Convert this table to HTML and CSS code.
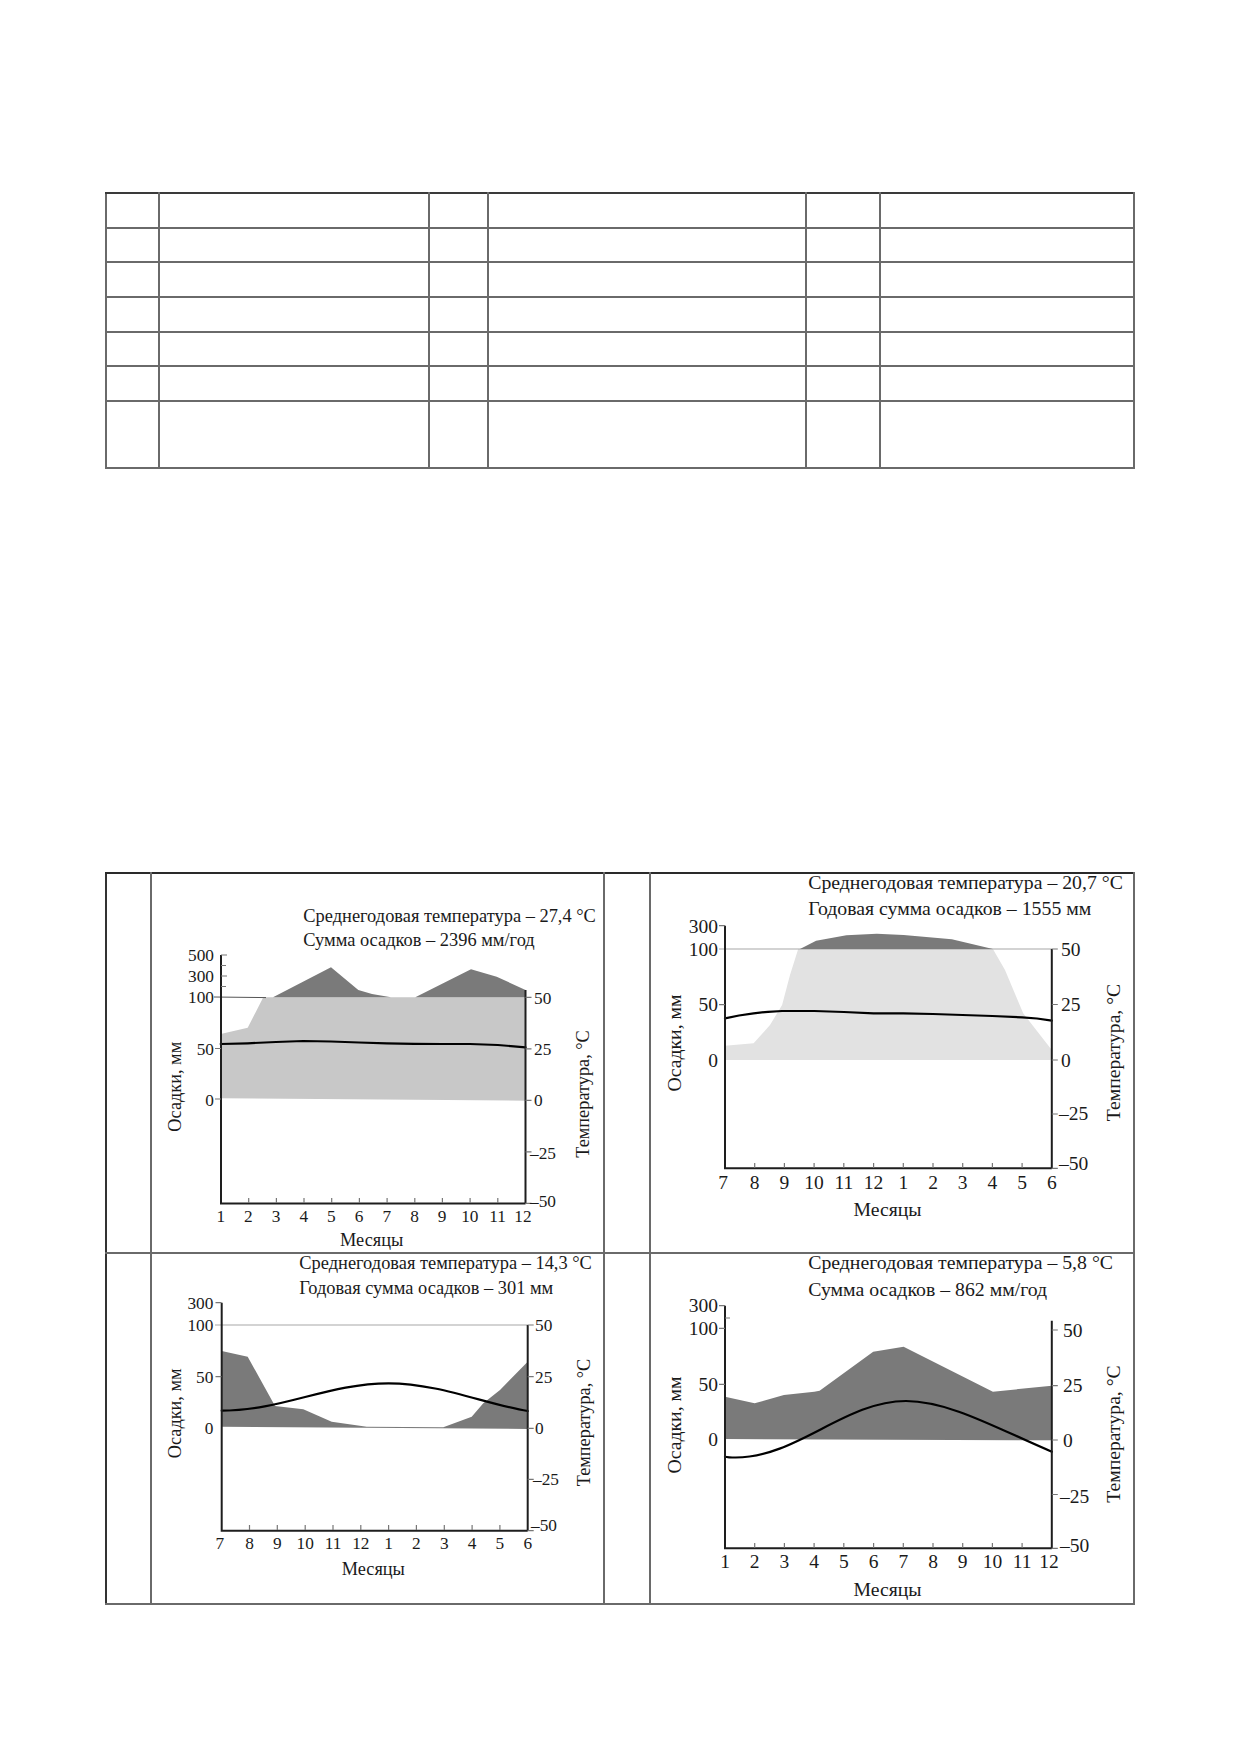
FILE: index.html
```html
<!DOCTYPE html>
<html lang="ru">
<head>
<meta charset="utf-8">
<title>Климатограммы</title>
<link rel="stylesheet" href="styles.css">
</head>
<body>
<div class="page">
  <table class="grid grid-top">
    <colgroup>
      <col class="c-n1"><col class="c-w1"><col class="c-n2"><col class="c-w2"><col class="c-n3"><col class="c-w3">
    </colgroup>
    <tr class="r35"><td></td><td></td><td></td><td></td><td></td><td></td></tr>
    <tr class="r34"><td></td><td></td><td></td><td></td><td></td><td></td></tr>
    <tr class="r35"><td></td><td></td><td></td><td></td><td></td><td></td></tr>
    <tr class="r35"><td></td><td></td><td></td><td></td><td></td><td></td></tr>
    <tr class="r34"><td></td><td></td><td></td><td></td><td></td><td></td></tr>
    <tr class="r35"><td></td><td></td><td></td><td></td><td></td><td></td></tr>
    <tr class="r67"><td></td><td></td><td></td><td></td><td></td><td></td></tr>
  </table>

  <table class="grid grid-charts">
    <colgroup>
      <col class="c-a"><col class="c-b"><col class="c-c"><col class="c-d">
    </colgroup>
    <tr>
      <td></td>
      <td class="chart-cell">
        <svg class="chart chart-s row1" viewBox="152 874 450 378">
          <polygon class="area-light1" points="220.7,1034 247.7,1027.7 263.3,997.3 525.5,997.3 525.5,1100.7 220.7,1098.3"/>
          <polygon class="area-dark" points="273,997.3 331,967.3 358.3,990 372,994 391,997.3 415.3,997.3 471,969.3 496.7,976.7 525.5,990 525.5,997.3"/>
          <line class="ref-dark" x1="214" y1="997" x2="266" y2="997.6"/>
          <polyline class="temp" points="220.7,1044 247.7,1043.3 276,1042 303.3,1041 331,1041.5 359,1042.5 386.7,1043.3 414,1043.8 442,1044 470,1044 497.8,1045 525.5,1047.3"/>
          <path class="axis" d="M221,955 V1203.5 H525.5 M525.5,990 V1203.5"/>
          <path class="tick" d="M221,955 h6 M221,965.5 h5 M221,976 h6 M221,986.5 h5 M215,1048.5 h6 M215,1099 h6 M525.5,997.3 h6 M525.5,1048.8 h6 M525.5,1100.3 h6 M525.5,1151.8 h6 M525.5,1203.3 h6 M248.7,1203 v-5 M276.4,1203 v-5 M304,1203 v-5 M331.7,1203 v-5 M359.4,1203 v-5 M387.1,1203 v-5 M414.8,1203 v-5 M442.4,1203 v-5 M470.1,1203 v-5 M497.8,1203 v-5"/>
          <g class="num-s">
            <text class="end" x="214" y="961">500</text>
            <text class="end" x="214" y="982">300</text>
            <text class="end" x="214" y="1003">100</text>
            <text class="end" x="214" y="1055">50</text>
            <text class="end" x="214" y="1105.5">0</text>
            <text x="534" y="1003.5">50</text>
            <text x="534" y="1055">25</text>
            <text x="534" y="1106">0</text>
            <text x="530" y="1158.5">–25</text>
            <text x="530" y="1207">–50</text>
          </g>
          <g class="num-s mid">
            <text x="220.7" y="1221.5">1</text><text x="248.4" y="1221.5">2</text><text x="276.1" y="1221.5">3</text><text x="303.7" y="1221.5">4</text><text x="331.4" y="1221.5">5</text><text x="359.1" y="1221.5">6</text><text x="386.8" y="1221.5">7</text><text x="414.5" y="1221.5">8</text><text x="442.1" y="1221.5">9</text><text x="469.8" y="1221.5">10</text><text x="497.5" y="1221.5">11</text><text x="523" y="1221.5">12</text>
          </g>
          <text class="cap-s mid" transform="translate(180.5,1086.7) rotate(-90)">Осадки, мм</text>
          <text class="cap-s mid" transform="translate(589,1094) rotate(-90)">Температура, °C</text>
          <text class="cap-s mid" x="371.7" y="1246">Месяцы</text>
          <text class="ttl-s" x="303.3" y="921.5">Среднегодовая температура – 27,4 °C</text>
          <text class="ttl-s" x="303.3" y="946">Сумма осадков – 2396 мм/год</text>
        </svg>
      </td>
      <td></td>
      <td class="chart-cell">
        <svg class="chart chart-l row1" viewBox="651 874 481 378">
          <polygon class="area-light2" points="725,1045.7 753.6,1043.3 770,1025 782.1,1005 790,975 798.2,949 992.9,949 1005,970 1023.2,1013.3 1051.8,1050 1051.8,1060 725,1060"/>
          <line class="ref" x1="719" y1="949" x2="1051.8" y2="949"/>
          <polygon class="area-dark" points="800,949 816.1,940.7 846.4,935.3 876.8,933.7 903.6,935 951.8,939.3 992.9,949"/>
          <polyline class="temp" points="725,1018.3 739,1015.5 753.6,1013.3 768,1011.8 782.1,1011 814.3,1011 843.9,1012 873.6,1013.3 903.2,1013.3 932.9,1014 962.5,1015 992.3,1016 1022.1,1017.3 1037,1018.5 1051.8,1020.7"/>
          <path class="axis" d="M725,925.7 V1168.3 H1051.8 M1051.8,949 V1168.3"/>
          <path class="tick" d="M719,925.7 h6 M719,1004.7 h6 M1051.8,949 h6 M1051.8,1004.5 h6 M1051.8,1060 h6 M1051.8,1114 h6 M1051.8,1168.3 h6 M754.7,1168 v-5 M784.4,1168 v-5 M814.1,1168 v-5 M843.8,1168 v-5 M873.6,1168 v-5 M903.3,1168 v-5 M933,1168 v-5 M962.7,1168 v-5 M992.4,1168 v-5 M1022.1,1168 v-5"/>
          <g class="num-l">
            <text class="end" x="718" y="932.5">300</text>
            <text class="end" x="718" y="955.5">100</text>
            <text class="end" x="718" y="1011">50</text>
            <text class="end" x="718" y="1066.5">0</text>
            <text x="1061" y="955.5">50</text>
            <text x="1061" y="1011">25</text>
            <text x="1061" y="1066.5">0</text>
            <text x="1059" y="1119.5">–25</text>
            <text x="1059" y="1170">–50</text>
          </g>
          <g class="num-l mid">
            <text x="723" y="1188.5">7</text><text x="754.7" y="1188.5">8</text><text x="784.4" y="1188.5">9</text><text x="814.1" y="1188.5">10</text><text x="843.8" y="1188.5">11</text><text x="873.6" y="1188.5">12</text><text x="903.3" y="1188.5">1</text><text x="933" y="1188.5">2</text><text x="962.7" y="1188.5">3</text><text x="992.4" y="1188.5">4</text><text x="1022.1" y="1188.5">5</text><text x="1051.8" y="1188.5">6</text>
          </g>
          <text class="cap-l mid" transform="translate(681,1043) rotate(-90)">Осадки, мм</text>
          <text class="cap-l mid" transform="translate(1120,1052.5) rotate(-90)">Температура, °C</text>
          <text class="cap-l mid" x="887.5" y="1215.5">Месяцы</text>
          <text class="ttl-l" x="808.2" y="889">Среднегодовая температура – 20,7 °C</text>
          <text class="ttl-l" x="808.2" y="915">Годовая сумма осадков – 1555 мм</text>
        </svg>
      </td>
    </tr>
    <tr>
      <td></td>
      <td class="chart-cell">
        <svg class="chart chart-s row2" viewBox="152 1254 450 349">
          <line class="ref" x1="215" y1="1325" x2="527.7" y2="1325"/>
          <polygon class="area-dark" points="221.7,1351 247.7,1356.7 275,1406 303.3,1409.3 331.7,1421.7 366.7,1426.7 443.3,1427.3 471.7,1416.7 483.3,1403.3 500,1390 527.7,1361.7 527.7,1429 221.7,1426.7"/>
          <path class="temp" d="M221.7,1410.7 C281.8,1410.7 328.5,1383.3 388.6,1383.3 C438.7,1383.3 488,1405 527.7,1411"/>
          <path class="axis" d="M221.7,1302.7 V1530.7 H527.7 M527.7,1325 V1530.7"/>
          <path class="tick" d="M215.5,1302.7 h6 M215.5,1376.7 h6 M527.7,1325 h6 M527.7,1376.7 h6 M527.7,1428.3 h6 M527.7,1479.3 h6 M527.7,1530.7 h6 M249.5,1530 v-5 M277.3,1530 v-5 M305.2,1530 v-5 M333,1530 v-5 M360.8,1530 v-5 M388.6,1530 v-5 M416.4,1530 v-5 M444.3,1530 v-5 M472.1,1530 v-5 M499.9,1530 v-5"/>
          <g class="num-s">
            <text class="end" x="213.3" y="1309">300</text>
            <text class="end" x="213.3" y="1331">100</text>
            <text class="end" x="213.3" y="1382.7">50</text>
            <text class="end" x="213.3" y="1434.3">0</text>
            <text x="535" y="1331">50</text>
            <text x="535" y="1382.7">25</text>
            <text x="535" y="1434.3">0</text>
            <text x="533" y="1485.3">–25</text>
            <text x="531" y="1531">–50</text>
          </g>
          <g class="num-s mid">
            <text x="219.7" y="1549">7</text><text x="249.5" y="1549">8</text><text x="277.3" y="1549">9</text><text x="305.2" y="1549">10</text><text x="333" y="1549">11</text><text x="360.8" y="1549">12</text><text x="388.6" y="1549">1</text><text x="416.4" y="1549">2</text><text x="444.3" y="1549">3</text><text x="472.1" y="1549">4</text><text x="499.9" y="1549">5</text><text x="527.7" y="1549">6</text>
          </g>
          <text class="cap-s mid" transform="translate(180.5,1413.3) rotate(-90)">Осадки, мм</text>
          <text class="cap-s mid" transform="translate(590,1422.5) rotate(-90)">Температура, °C</text>
          <text class="cap-s mid" x="373.3" y="1575">Месяцы</text>
          <text class="ttl-s" x="299.3" y="1269">Среднегодовая температура – 14,3 °C</text>
          <text class="ttl-s" x="299.3" y="1293.7">Годовая сумма осадков – 301 мм</text>
        </svg>
      </td>
      <td></td>
      <td class="chart-cell">
        <svg class="chart chart-l row2" viewBox="651 1254 481 349">
          <polygon class="area-dark" points="725,1396.7 754.6,1403.3 783.9,1395 814.3,1391.7 819.6,1390.7 873.2,1351.7 903.6,1346.7 992.9,1391.7 1051.8,1385.7 1051.8,1440.3 725,1439"/>
          <path class="temp" d="M725,1456.7 C728,1457.5 731,1457.5 735.7,1457.5 C797,1457.5 845,1401 906,1401 C950,1401 1000,1430 1051.8,1451.7"/>
          <path class="axis" d="M725,1305.7 V1548.3 H1051.8 M1051.8,1320.7 V1548.3"/>
          <path class="tick" d="M719,1305.7 h6 M725,1318 h5 M719,1328.3 h6 M719,1384.3 h6 M1051.8,1330 h6 M1051.8,1385.7 h6 M1051.8,1440 h6 M1051.8,1494.5 h6 M1051.8,1548.3 h6 M754.7,1548 v-5 M784.4,1548 v-5 M814.1,1548 v-5 M843.8,1548 v-5 M873.6,1548 v-5 M903.3,1548 v-5 M933,1548 v-5 M962.7,1548 v-5 M992.4,1548 v-5 M1022.1,1548 v-5"/>
          <g class="num-l">
            <text class="end" x="718" y="1312">300</text>
            <text class="end" x="718" y="1334.5">100</text>
            <text class="end" x="718" y="1390.5">50</text>
            <text class="end" x="718" y="1446">0</text>
            <text x="1063" y="1336.5">50</text>
            <text x="1063" y="1392">25</text>
            <text x="1063" y="1446.5">0</text>
            <text x="1060" y="1503">–25</text>
            <text x="1060" y="1551.5">–50</text>
          </g>
          <g class="num-l mid">
            <text x="725" y="1568">1</text><text x="754.7" y="1568">2</text><text x="784.4" y="1568">3</text><text x="814.1" y="1568">4</text><text x="843.8" y="1568">5</text><text x="873.6" y="1568">6</text><text x="903.3" y="1568">7</text><text x="933" y="1568">8</text><text x="962.7" y="1568">9</text><text x="992.4" y="1568">10</text><text x="1022.1" y="1568">11</text><text x="1049" y="1568">12</text>
          </g>
          <text class="cap-l mid" transform="translate(681,1425) rotate(-90)">Осадки, мм</text>
          <text class="cap-l mid" transform="translate(1120,1434) rotate(-90)">Температура, °C</text>
          <text class="cap-l mid" x="887.5" y="1595.5">Месяцы</text>
          <text class="ttl-l" x="808.2" y="1269">Среднегодовая температура – 5,8 °C</text>
          <text class="ttl-l" x="808.2" y="1295.5">Сумма осадков – 862 мм/год</text>
        </svg>
      </td>
    </tr>
  </table>
</div>
</body>
</html>
```
FILE: styles.css
```css
html, body {
  margin: 0;
  padding: 0;
  background: #ffffff;
}

.page {
  width: 1240px;
  min-height: 1754px;
  padding-top: 192px;
  box-sizing: border-box;
  font-family: "Liberation Serif", "Times New Roman", serif;
}

.grid {
  border-collapse: collapse;
  table-layout: fixed;
  margin-left: 105px;
  width: 1028px;
}

.grid td {
  border: 2px solid #6a6a6a;
  padding: 0;
  vertical-align: top;
}

.grid-top tr:first-child td {
  border-top-color: #3a3a3a;
}

.c-n1 { width: 53px; }
.c-w1 { width: 270px; }
.c-n2 { width: 59px; }
.c-w2 { width: 318px; }
.c-n3 { width: 74px; }
.c-w3 { width: 254px; }

.r34 td { height: 32px; }
.r35 td { height: 33px; }
.r67 td { height: 65px; }

.grid-charts {
  margin-top: 403px;
}

.grid-charts tr:first-child td {
  border-top-color: #2a2a2a;
}

.grid-charts td:first-child {
  border-left-color: #333333;
}

.c-a { width: 45px; }
.c-b { width: 453px; }
.c-c { width: 46px; }
.c-d { width: 484px; }

.chart {
  display: block;
  overflow: visible;
}

.chart-s { width: 450px; }
.chart-l { width: 481px; }
.row1 { height: 378px; }
.row2 { height: 349px; }

.area-light1 { fill: #c8c8c8; }
.area-light2 { fill: #e2e2e2; }
.area-dark { fill: #7a7a7a; }

.ref {
  stroke: #a8a8a8;
  stroke-width: 1.2;
}

.ref-dark {
  stroke: #555555;
  stroke-width: 1;
}

.temp {
  fill: none;
  stroke: #000000;
  stroke-width: 2.2;
  stroke-linejoin: round;
  stroke-linecap: round;
}

.axis {
  fill: none;
  stroke: #1e1e1e;
  stroke-width: 2;
}

.tick {
  fill: none;
  stroke: #777777;
  stroke-width: 1.2;
}

.chart text {
  font-family: "Liberation Serif", "Times New Roman", serif;
  fill: #1a1a1a;
}

.chart .end { text-anchor: end; }
.chart .mid, .chart .mid text { text-anchor: middle; }

.num-s text { font-size: 17.3px; }
.num-l text { font-size: 19.5px; }
.chart .cap-s { font-size: 18.3px; }
.chart .cap-l { font-size: 19.7px; }
.chart .ttl-s { font-size: 18.4px; }
.chart .ttl-l { font-size: 19.8px; }
```
